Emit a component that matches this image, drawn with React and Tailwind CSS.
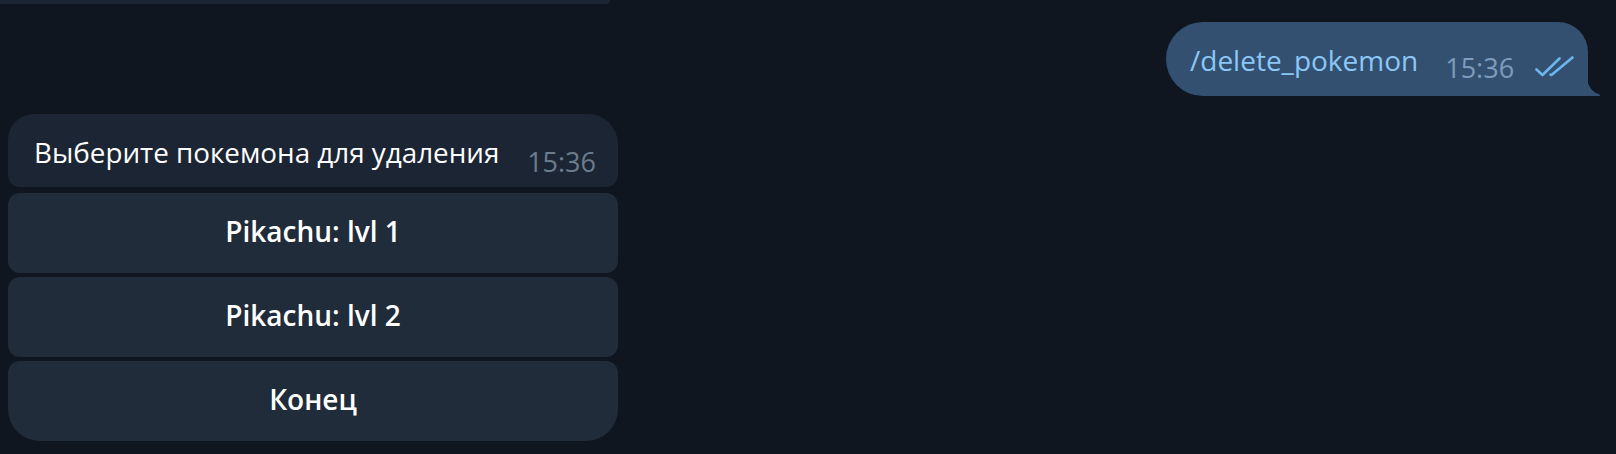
import React from "react";

function DoubleCheck() {
  return (
    <svg width="40" height="22" viewBox="0 0 40 22" fill="none" className="block">
      <path d="M1.5 13.5 L7.5 19 L24.5 2.5" stroke="#6cb6ee" strokeWidth="2.6" strokeLinecap="round" strokeLinejoin="round" />
      <path d="M15.5 18.5 L16.5 19 L37.5 1.5" stroke="#6cb6ee" strokeWidth="2.6" strokeLinecap="round" strokeLinejoin="round" />
    </svg>
  );
}

function Tail() {
  return (
    <svg width="16" height="26" viewBox="0 0 16 26" className="absolute bottom-0 right-[-14px] block">
      <path d="M0 0 C0.5 14 4 21 13.5 24.5 Q15 25.3 13.5 26 L0 26 Z" fill="#345071" />
    </svg>
  );
}

function KeyButton({ children, last }) {
  return (
    <div
      className={
        "h-[80px] flex items-center justify-center pb-[4px] bg-[#212c3a] text-white text-[28px] font-semibold " +
        (last ? "rounded-tl-[12px] rounded-tr-[12px] rounded-bl-[32px] rounded-br-[32px]" : "rounded-[12px]")
      }
    >
      {children}
    </div>
  );
}

export default function App() {
  return (
    <div className="w-[1616px] h-[454px] overflow-hidden bg-[#0f1620] flex flex-col font-['Open_Sans',sans-serif]">
      <div className="h-[4px] w-[610px] bg-[#1c2533] rounded-br-[14px]" />

      <div className="mt-[18px] flex justify-end pr-[28px]">
        <div className="relative h-[74px] w-[422px] bg-[#345071] rounded-tl-[37px] rounded-bl-[37px] rounded-tr-[30px] flex items-start pl-[24px]">
          <span className="pt-[19px] text-[28px] leading-[38px] text-[#8bc7f6] whitespace-nowrap">/delete_pokemon</span>
          <span className="ml-[27px] pt-[29px] text-[27px] leading-[34px] text-[#7d9cbd] whitespace-nowrap">15:36</span>
          <span className="ml-[21px] pt-[34px]">
            <DoubleCheck />
          </span>
          <Tail />
        </div>
      </div>

      <div className="mt-[18px] ml-[8px] w-[610px] flex flex-col">
        <div className="h-[73px] bg-[#1c2533] rounded-tl-[26px] rounded-tr-[30px] rounded-bl-[12px] rounded-br-[12px] flex items-start pl-[26px] pr-[22px]">
          <span className="pt-[19px] text-[27.8px] leading-[38px] text-white whitespace-nowrap">Выберите покемона для удаления</span>
          <span className="ml-auto pt-[31px] text-[27px] leading-[34px] text-[#6b7c8c] whitespace-nowrap">15:36</span>
        </div>
        <div className="mt-[6px] flex flex-col gap-[4px]">
          <KeyButton>Pikachu: lvl 1</KeyButton>
          <KeyButton>Pikachu: lvl 2</KeyButton>
          <KeyButton last>Конец</KeyButton>
        </div>
      </div>
    </div>
  );
}
